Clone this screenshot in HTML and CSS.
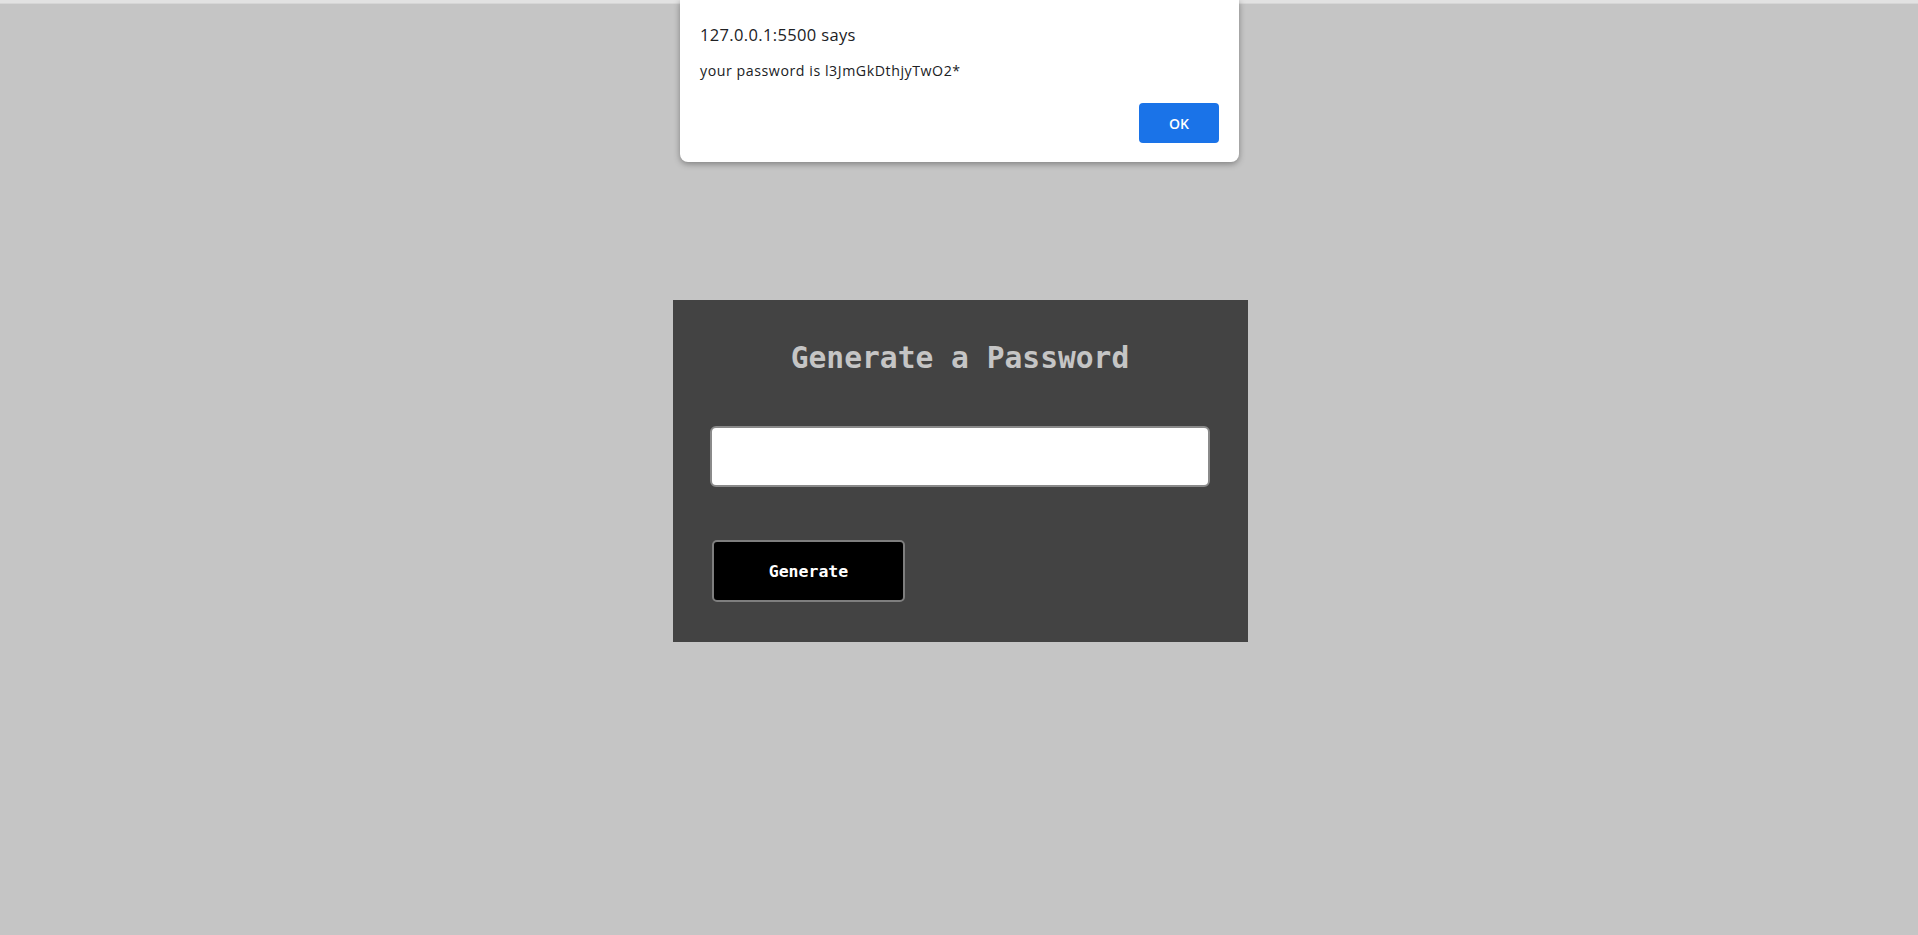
FILE: index.html
```html
<!DOCTYPE html>
<html lang="en">
<head>
<meta charset="utf-8">
<title>Password Generator</title>
<link rel="stylesheet" href="styles.css">
</head>
<body>
<div class="topstrip"></div>
<main class="stage">
  <section class="card">
    <h1 class="card-title">Generate a Password</h1>
    <input class="pw-input" type="text" aria-label="password">
    <button class="gen-btn" type="button">Generate</button>
  </section>
</main>
<div class="dialog" role="alertdialog">
  <div class="dialog-title">127.0.0.1:5500 says</div>
  <div class="dialog-msg">your password is l3JmGkDthjyTwO2*</div>
  <div class="dialog-actions">
    <button class="dialog-ok" type="button">OK</button>
  </div>
</div>
</body>
</html>
```
FILE: styles.css
```css
html, body {
  margin: 0;
  padding: 0;
  height: 100%;
}
body {
  background: #c5c5c5;
  font-family: "DejaVu Sans Mono", monospace;
  position: relative;
  overflow: hidden;
}
.topstrip {
  height: 3px;
  background: #e2e2e2;
  border-bottom: 1px solid #d6d6d6;
}
.stage {
  display: flex;
  justify-content: center;
  padding-top: 296px;
  padding-left: 3px;
}
.card {
  width: 575px;
  box-sizing: border-box;
  height: 342px;
  background: #434343;
  padding: 40px 38px 0 37px;
  display: flex;
  flex-direction: column;
  align-items: flex-start;
}
.card-title {
  align-self: stretch;
  margin: 0;
  text-align: center;
  font-family: "DejaVu Sans Mono", monospace;
  font-weight: bold;
  font-size: 29.6px;
  line-height: 36px;
  color: #c5c5c5;
}
.pw-input {
  margin-top: 50px;
  width: 500px;
  height: 61px;
  box-sizing: border-box;
  border: 2px solid #8a8a8a;
  border-radius: 6px;
  background: #ffffff;
  outline: none;
  padding: 0 10px;
  font-family: "DejaVu Sans Mono", monospace;
  font-size: 16px;
}
.gen-btn {
  margin-top: 53px;
  margin-left: 2px;
  width: 193px;
  height: 62px;
  box-sizing: border-box;
  background: #000000;
  border: 2px solid #7e7e7e;
  border-radius: 5px;
  color: #ffffff;
  font-family: "DejaVu Sans Mono", monospace;
  font-weight: bold;
  font-size: 16.5px;
  cursor: pointer;
}
.dialog {
  position: absolute;
  top: 0;
  left: 680px;
  width: 559px;
  height: 162px;
  box-sizing: border-box;
  background: #ffffff;
  border-radius: 0 0 8px 8px;
  box-shadow: 0 2px 6px rgba(0, 0, 0, 0.35);
  padding: 24px 20px 0 20px;
  font-family: "Open Sans", "Noto Sans", sans-serif;
  color: #202124;
}
.dialog-title {
  font-size: 16.5px;
  line-height: 22px;
  letter-spacing: 0.35px;
}
.dialog-msg {
  margin-top: 15px;
  font-size: 14.2px;
  line-height: 19px;
  letter-spacing: 0.55px;
}
.dialog-actions {
  display: flex;
  justify-content: flex-end;
  margin-top: 23px;
}
.dialog-ok {
  width: 80px;
  height: 40px;
  border: none;
  border-radius: 4px;
  background: #1a73e8;
  color: #ffffff;
  font-family: "Open Sans", "Noto Sans", sans-serif;
  font-weight: 600;
  font-size: 14px;
}
```
